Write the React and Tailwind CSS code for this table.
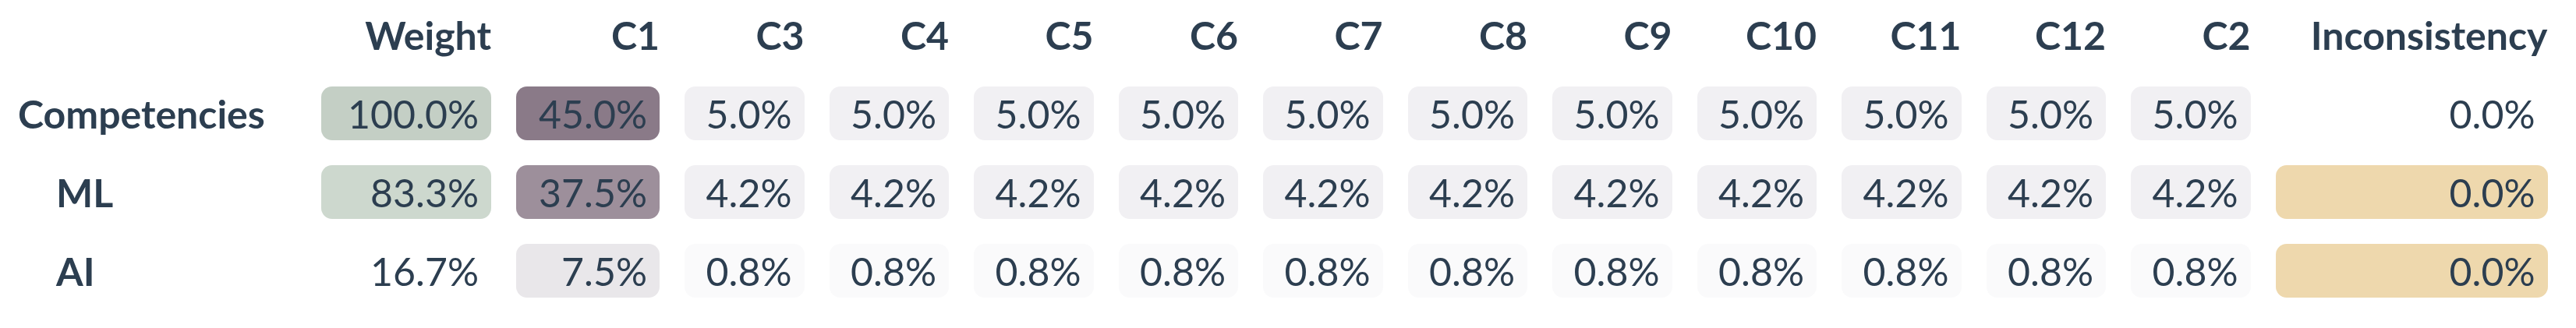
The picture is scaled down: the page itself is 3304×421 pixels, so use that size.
const COLUMNS = ["Weight", "C1", "C3", "C4", "C5", "C6", "C7", "C8", "C9", "C10", "C11", "C12", "C2", "Inconsistency"];

// bg per cell, "" means no box
const ROWS = [
	{
		label: "Competencies",
		indent: false,
		cells: [
			["100.0%", "bg-[#c4cfc5]"],
			["45.0%", "bg-[#8a7a88]"],
			...Array(11).fill(["5.0%", "bg-[#f1f0f3]"]),
			["0.0%", ""],
		],
	},
	{
		label: "ML",
		indent: true,
		cells: [
			["83.3%", "bg-[#cdd8ce]"],
			["37.5%", "bg-[#9d8f9b]"],
			...Array(11).fill(["4.2%", "bg-[#f1f0f3]"]),
			["0.0%", "bg-[#eed8ad]"],
		],
	},
	{
		label: "AI",
		indent: true,
		cells: [
			["16.7%", ""],
			["7.5%", "bg-[#e9e7ea]"],
			...Array(11).fill(["0.8%", "bg-[#fafafb]"]),
			["0.0%", "bg-[#eed8ad]"],
		],
	},
];

const App = () => {
	return (
		<div className="w-[3304px] h-[421px] bg-white pl-[23px] pt-[10px] text-[#2c3e50] font-['Lato','Open_Sans',sans-serif] text-[50px]">
			<div className="grid grid-cols-[357px_218px_184px_repeat(11,153.5px)_349px] auto-rows-[69px] gap-x-8 gap-y-8">
				{/* ── Header ── */}
				<div />
				{COLUMNS.map((col) => (
					<div key={col} className="flex items-center justify-end font-bold leading-none">
						{col}
					</div>
				))}

				{/* ── Body ── */}
				{ROWS.map((row) => (
					<>
						<div
							key={row.label}
							className={["flex items-center font-bold leading-none", row.indent ? "pl-[49px]" : ""].join(" ")}
						>
							{row.label}
						</div>
						{row.cells.map(([value, bg], i) => (
							<div
								key={row.label + i}
								className={["flex items-center justify-end rounded-[14px] pr-4 leading-none", bg].join(" ")}
							>
								{value}
							</div>
						))}
					</>
				))}
			</div>
		</div>
	);
};

export default App;
